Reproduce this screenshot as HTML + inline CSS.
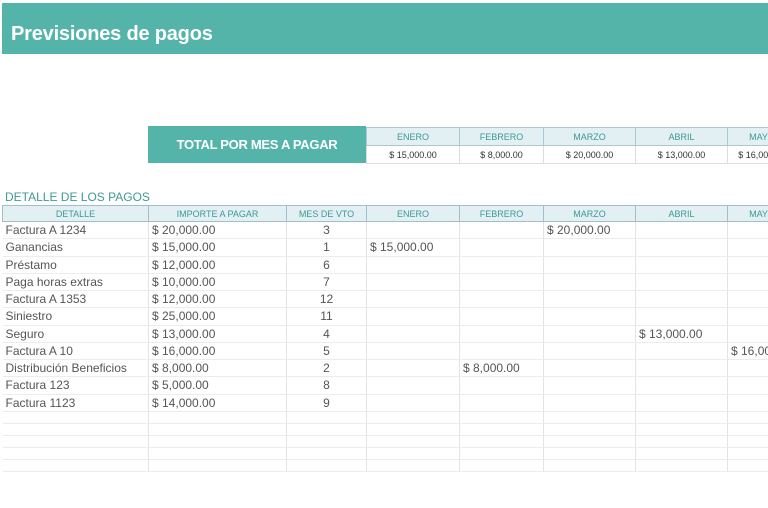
<!DOCTYPE html>
<html><head><meta charset="utf-8"><style>
*{margin:0;padding:0;box-sizing:border-box}
body{width:768px;height:508px;background:#fff;position:relative;overflow:hidden;font-family:"Liberation Sans",sans-serif;color:#555}
.bar{position:absolute;left:2px;top:3px;width:766px;height:51px;background:#55b4a9}
.bar span{position:absolute;left:9px;top:20px;font-size:20px;font-weight:bold;color:#fff;letter-spacing:-0.2px}
.tot{position:absolute;left:148px;top:126px;width:218px;height:37px;background:#55b4a9;color:#fff;font-weight:bold;font-size:13px;text-align:center;line-height:37px;letter-spacing:-0.3px}
table{position:absolute;border-collapse:collapse;table-layout:fixed}
td{overflow:hidden;white-space:nowrap}
.m td{border:1px solid #a9c9d6;font-size:9px;text-align:center;height:18px}
.m tr:first-child td{background:#e2eff3;color:#3d9a93}
.m tr:last-child td{color:#333;border-color:#ddd}
.lbl{position:absolute;left:5px;top:190px;font-size:12px;color:#3d9a93}
.d td{border-right:1px solid #e3e3e3;border-bottom:1px solid #ececec;font-size:12px;height:17.25px;padding-left:3px;color:#555}
.d tr.h td{background:#e2eff3;color:#3d9a93;font-size:9px;text-align:center;border:1px solid #9fbfd0;height:16px;padding:0}
.d td.c{text-align:center;padding:0}
.d tr.e td{height:12px}
</style></head><body>
<div class="bar"><span>Previsiones de pagos</span></div>
<div class="tot">TOTAL POR MES A PAGAR</div>
<table class="m" style="left:366px;top:127px;width:430px">
<colgroup><col style="width:93px"><col style="width:84px"><col style="width:92px"><col style="width:92px"><col style="width:69px"></colgroup>
<tr><td>ENERO</td><td>FEBRERO</td><td>MARZO</td><td>ABRIL</td><td>MAYO</td></tr>
<tr><td>$ 15,000.00</td><td>$ 8,000.00</td><td>$ 20,000.00</td><td>$ 13,000.00</td><td>$ 16,000.00</td></tr>
</table>
<div class="lbl">DETALLE DE LOS PAGOS</div>
<table class="d" style="left:2px;top:205px;width:794px">
<colgroup><col style="width:146px"><col style="width:138px"><col style="width:80px"><col style="width:93px"><col style="width:84px"><col style="width:92px"><col style="width:92px"><col style="width:69px"></colgroup>
<tr class="h"><td>DETALLE</td><td>IMPORTE A PAGAR</td><td>MES DE VTO</td><td>ENERO</td><td>FEBRERO</td><td>MARZO</td><td>ABRIL</td><td>MAYO</td></tr>
<tr><td>Factura A 1234</td><td>$ 20,000.00</td><td class="c">3</td><td></td><td></td><td>$ 20,000.00</td><td></td><td></td></tr>
<tr><td>Ganancias</td><td>$ 15,000.00</td><td class="c">1</td><td>$ 15,000.00</td><td></td><td></td><td></td><td></td></tr>
<tr><td>Préstamo</td><td>$ 12,000.00</td><td class="c">6</td><td></td><td></td><td></td><td></td><td></td></tr>
<tr><td>Paga horas extras</td><td>$ 10,000.00</td><td class="c">7</td><td></td><td></td><td></td><td></td><td></td></tr>
<tr><td>Factura A 1353</td><td>$ 12,000.00</td><td class="c">12</td><td></td><td></td><td></td><td></td><td></td></tr>
<tr><td>Siniestro</td><td>$ 25,000.00</td><td class="c">11</td><td></td><td></td><td></td><td></td><td></td></tr>
<tr><td>Seguro</td><td>$ 13,000.00</td><td class="c">4</td><td></td><td></td><td></td><td>$ 13,000.00</td><td></td></tr>
<tr><td>Factura A 10</td><td>$ 16,000.00</td><td class="c">5</td><td></td><td></td><td></td><td></td><td>$ 16,000.00</td></tr>
<tr><td>Distribución Beneficios</td><td>$ 8,000.00</td><td class="c">2</td><td></td><td>$ 8,000.00</td><td></td><td></td><td></td></tr>
<tr><td>Factura 123</td><td>$ 5,000.00</td><td class="c">8</td><td></td><td></td><td></td><td></td><td></td></tr>
<tr><td>Factura 1123</td><td>$ 14,000.00</td><td class="c">9</td><td></td><td></td><td></td><td></td><td></td></tr>
<tr class="e"><td></td><td></td><td></td><td></td><td></td><td></td><td></td><td></td></tr>
<tr class="e"><td></td><td></td><td></td><td></td><td></td><td></td><td></td><td></td></tr>
<tr class="e"><td></td><td></td><td></td><td></td><td></td><td></td><td></td><td></td></tr>
<tr class="e"><td></td><td></td><td></td><td></td><td></td><td></td><td></td><td></td></tr>
<tr class="e"><td></td><td></td><td></td><td></td><td></td><td></td><td></td><td></td></tr>
</table>
</body></html>
